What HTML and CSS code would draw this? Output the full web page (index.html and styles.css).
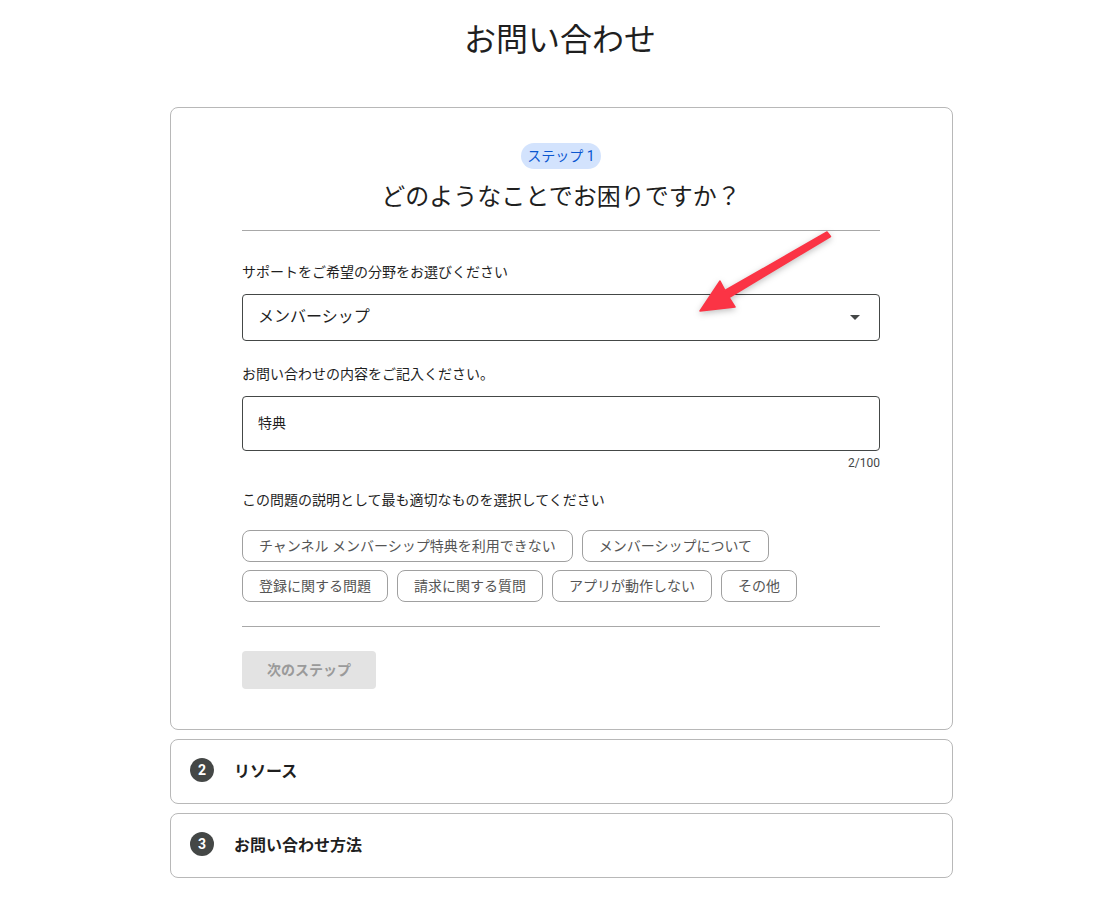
FILE: index.html
```html
<!DOCTYPE html>
<html lang="ja">
<head>
    <meta charset="UTF-8">
    <meta name="viewport" content="width=device-width, initial-scale=1.0">
    <title>お問い合わせ</title>
    <link rel="stylesheet" href="styles.css">
</head>
<body>
    <h1 class="page-title">お問い合わせ</h1>

    <main class="steps">
        <!-- Step 1 -->
        <section class="card card-open">
            <div class="step-head">
                <span class="badge">ステップ 1</span>
                <h2>どのようなことでお困りですか？</h2>
            </div>
            <hr class="divider">

            <label class="field-label" for="area">サポートをご希望の分野をお選びください</label>
            <div class="select" id="area">
                <span>メンバーシップ</span>
                <span class="caret"></span>
            </div>

            <label class="field-label label-gap" for="detail">お問い合わせの内容をご記入ください。</label>
            <div class="text-input" id="detail">特典</div>
            <div class="counter">2/100</div>

            <p class="field-label label-chips">この問題の説明として最も適切なものを選択してください</p>
            <div class="chips">
                <button class="chip">チャンネル メンバーシップ特典を利用できない</button>
                <button class="chip">メンバーシップについて</button>
                <button class="chip">登録に関する問題</button>
                <button class="chip">請求に関する質問</button>
                <button class="chip">アプリが動作しない</button>
                <button class="chip">その他</button>
            </div>

            <hr class="divider divider-bottom">
            <button class="next-button" disabled>次のステップ</button>
        </section>

        <!-- Step 2 -->
        <section class="card card-closed">
            <span class="step-num">2</span>
            <span class="step-title">リソース</span>
        </section>

        <!-- Step 3 -->
        <section class="card card-closed">
            <span class="step-num">3</span>
            <span class="step-title">お問い合わせ方法</span>
        </section>
    </main>

    <!-- annotation arrow -->
    <svg class="pointer" width="160" height="110" viewBox="690 225 160 110">
        <polygon points="700,311 720,281 725,290.5 827,232 830.5,236.5 729,297.5 735,307"
                 fill="#fb3445" stroke="#fb3445" stroke-width="1.5" stroke-linejoin="round"/>
    </svg>
</body>
</html>
```

FILE: styles.css
```css
body {
    margin: 0;
    background: #fff;
    color: #1f1f1f;
    font-family: Roboto, "Noto Sans CJK JP", sans-serif;
    position: relative;
}

.page-title {
    margin: 19px 0 46px;
    font-size: 32px;
    line-height: 42px;
    font-weight: 400;
    text-align: center;
    color: #1f1f1f;
}

.steps {
    width: 783px;
    margin: 0 0 0 calc(50% - 390px);
    display: flex;
    flex-direction: column;
    gap: 9px;
}

.card {
    border: 1px solid #b8b8b8;
    border-radius: 8px;
    box-sizing: border-box;
    background: #fff;
}

.card-open {
    padding: 35px 72px 40px 71px;
}

.step-head {
    display: flex;
    flex-direction: column;
    align-items: center;
}

.badge {
    background: #d3e3fd;
    color: #0b57d0;
    font-size: 14px;
    line-height: 26px;
    height: 26px;
    padding: 0 6px;
    border-radius: 13px;
}

.step-head h2 {
    margin: 12px 0 0;
    font-size: 24px;
    line-height: 32px;
    font-weight: 400;
}

.divider {
    border: none;
    border-top: 1px solid #a8a8a8;
    margin: 17px 0 0;
}

.field-label {
    display: block;
    margin: 31px 0 12px;
    font-size: 14px;
    line-height: 20px;
    color: #1f1f1f;
}

.label-gap {
    margin-top: 23px;
}

.select {
    height: 47px;
    box-sizing: border-box;
    border: 1px solid #444746;
    border-radius: 4px;
    padding: 0 19px 5px 15px;
    display: flex;
    align-items: center;
    justify-content: space-between;
    font-size: 16px;
}

.caret {
    width: 0;
    height: 0;
    margin-top: 5px;
    border-left: 5px solid transparent;
    border-right: 5px solid transparent;
    border-top: 5px solid #444746;
}

.text-input {
    height: 55px;
    box-sizing: border-box;
    border: 1px solid #444746;
    border-radius: 4px;
    padding: 0 15px 3px;
    display: flex;
    align-items: center;
    font-size: 14px;
}

.counter {
    margin-top: 4px;
    text-align: right;
    font-size: 12px;
    line-height: 16px;
    color: #444746;
}

.label-chips {
    margin: 19px 0 20px;
}

.chips {
    display: flex;
    flex-wrap: wrap;
    gap: 8px 9px;
}

.chip {
    height: 32px;
    padding: 0 16px 2px;
    border: 1px solid #a0a0a0;
    border-radius: 8px;
    background: #fff;
    color: #555;
    font-family: Roboto, "Noto Sans CJK JP", sans-serif;
    font-size: 14px;
    cursor: pointer;
}

.divider-bottom {
    margin: 24px 0 24px;
}

.next-button {
    height: 38px;
    padding: 0 25px 2px;
    border: none;
    border-radius: 4px;
    background: #e3e3e3;
    color: #9a9a9a;
    font-family: Roboto, "Noto Sans CJK JP", sans-serif;
    font-size: 14px;
    font-weight: 700;
}

.card-closed {
    height: 65px;
    padding: 0 19px 3px;
    display: flex;
    align-items: center;
    gap: 20px;
}

.step-num {
    width: 24px;
    height: 24px;
    border-radius: 50%;
    background: #444746;
    color: #fff;
    font-size: 14px;
    font-weight: 700;
    display: flex;
    align-items: center;
    justify-content: center;
}

.step-title {
    font-size: 16px;
    font-weight: 700;
    color: #1f1f1f;
}

.pointer {
    position: absolute;
    left: 690px;
    top: 225px;
    filter: drop-shadow(0 2px 3px rgba(0, 0, 0, 0.25));
}
```
